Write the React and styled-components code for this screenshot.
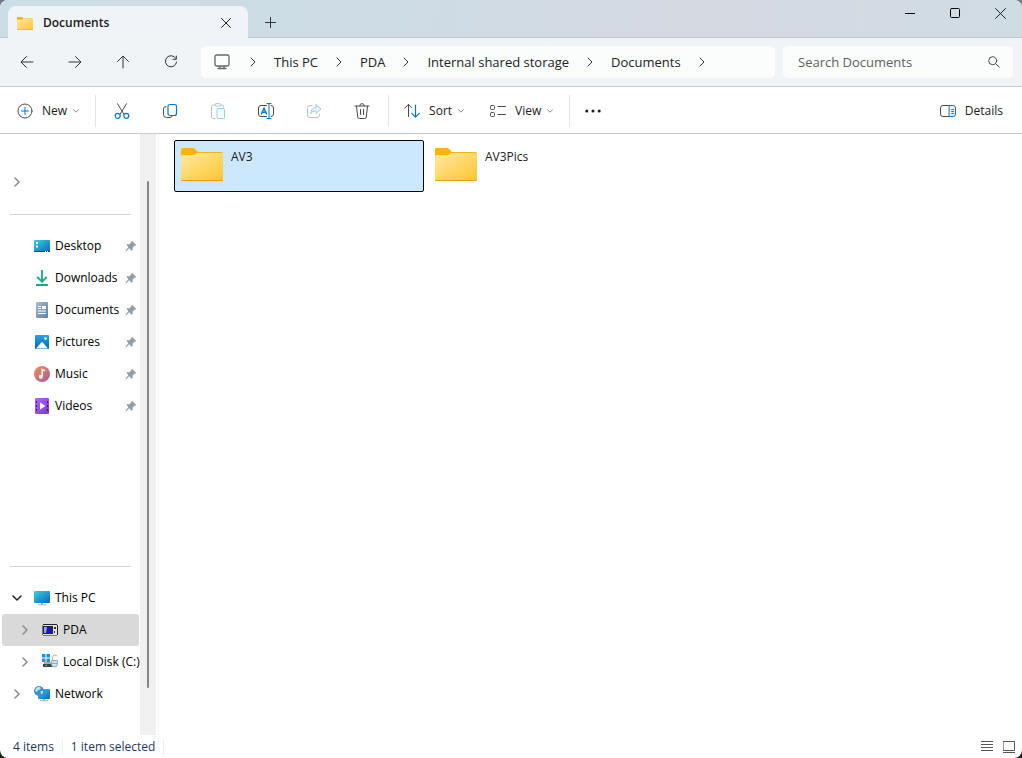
import React, { useState } from 'react';
import styled, { createGlobalStyle } from 'styled-components';

const quickAccess = [
  { name: 'Desktop', icon: 'desktop' },
  { name: 'Downloads', icon: 'downloads' },
  { name: 'Documents', icon: 'documents' },
  { name: 'Pictures', icon: 'pictures' },
  { name: 'Music', icon: 'music' },
  { name: 'Videos', icon: 'videos' },
];

const devices = [
  { name: 'This PC', icon: 'pc', depth: 0, open: true },
  { name: 'PDA', icon: 'pda', depth: 1, selected: true },
  { name: 'Local Disk (C:)', icon: 'disk', depth: 1 },
  { name: 'Network', icon: 'network', depth: 0 },
];

const crumbs = ['This PC', 'PDA', 'Internal shared storage', 'Documents'];

const folders = ['AV3', 'AV3Pics'];


// line icons of the bars
const Line = ({ w = 16, h = 16, color = '#4a4a4a', children }) => (
  <svg width={w} height={h} viewBox={`0 0 ${w} ${h}`} fill="none" stroke={color} strokeLinecap="round" strokeLinejoin="round" aria-hidden="true">
    {children}
  </svg>
);

const Chevron = ({ down, color = '#333', strokeWidth = 1 }) => (
  <Line w={10} h={10} color={color}>
    <path strokeWidth={strokeWidth} d={down ? 'M1 3l4 4 4-4' : 'M3 1l4 4-4 4'} />
  </Line>
);

const SmallDown = () => (
  <Line w={6} h={4} color="#8a8a8a"><path d="M.5.7L3 3.2 5.500.7" /></Line>
);

const Back = () => <Line color="#333"><path d="M14 8H2.300M7.500 2.500L2 8l5.500 5.500" /></Line>;
const Forward = () => <Line color="#333"><path d="M2 8h11.700M8.500 2.500L14 8l-5.500 5.500" /></Line>;
const Up = () => <Line color="#333"><path d="M8 14V2.300M2.500 7.500L8 2l5.500 5.500" /></Line>;
const Refresh = () => (
  <Line color="#333"><path d="M12.800 4.300A5.600 5.600 0 1 0 13.600 8M13.300 2v3.300H10" /></Line>
);
const Monitor = () => (
  <Line color="#666">
    <rect x="1" y="1" width="14" height="11" rx="1.800" strokeWidth="1.300" />
    <path strokeWidth="1.300" d="M6 12.500v2M10 12.500v2M4 14.500h8" />
  </Line>
);
const Close = ({ size = 10 }) => (
  <Line w={size} h={size} color="#222"><path d={`M.5.5l${size - 1} ${size - 1}M${size - .5}.5L.5 ${size - .5}`} /></Line>
);
const Plus = () => <Line w={11} h={11} color="#333"><path d="M5.500.5v10M.5 5.500h10" /></Line>;
const Minimize = () => <Line w={10} h={11} color="#000"><path d="M0 5.500h10" /></Line>;
const Maximize = () => <Line w={10} h={10} color="#000"><rect x=".5" y=".5" width="9" height="9" rx="1" /></Line>;
const Search = () => (
  <Line w={12} h={12} color="#444"><circle cx="4.700" cy="4.700" r="4" /><path d="M7.700 7.700l3.600 3.600" /></Line>
);

const NewIcon = () => (
  <Line>
    <circle cx="8" cy="8" r="7" />
    <path stroke="#0078d4" d="M8 4.500v7M4.500 8h7" />
  </Line>
);
const Cut = () => (
  <Line>
    <path d="M3.500.7l6.300 10.400M12.500.7L6.200 11.100" />
    <g stroke="#0078d4" strokeWidth="1.200"><circle cx="3.700" cy="12.800" r="2.500" /><circle cx="12.300" cy="12.800" r="2.500" /></g>
  </Line>
);
const Copy = () => (
  <Line>
    <path d="M4 3.500A2.500 2.500 0 0 0 1.500 6v5.500a3 3 0 0 0 3 3H8a2.500 2.500 0 0 0 2.300-1.500" />
    <rect x="6" y="1.500" width="8.500" height="11" rx="2" stroke="#0078d4" strokeWidth="1.200" />
  </Line>
);
const Paste = () => (
  <Line color="#c0c0c0">
    <path d="M5 2H2.500a1 1 0 0 0-1 1v11.500a1 1 0 0 0 1 1H5M11 2h1.500a1 1 0 0 1 1 1v1" />
    <rect x="5" y=".6" width="5.500" height="2.500" rx="1.200" />
    <rect x="7" y="5.500" width="7.500" height="10" rx="1" stroke="#9ccbf0" />
  </Line>
);
const Rename = () => (
  <Line>
    <path d="M8.500 2.500H3a2.500 2.500 0 0 0-2.500 2.500v6A2.500 2.500 0 0 0 3 13.500h5.500M13 2.500a2.500 2.500 0 0 1 2.500 2.500v6a2.500 2.500 0 0 1-2.500 2.500" />
    <path stroke="#0078d4" strokeWidth="1.400" d="M3.500 11L6 5l2.500 6M4.300 9.300h3.400" />
    <path stroke="#0078d4" d="M9 .5h4M9 15.500h4M11 .5v15" />
  </Line>
);
const Share = () => (
  <Line color="#c0c0c0">
    <path d="M6 2.500H4A2.500 2.500 0 0 0 1.500 5v7A2.500 2.500 0 0 0 4 14.500h7a2.500 2.500 0 0 0 2.500-2.500v-.8" />
    <path stroke="#9ccbf0" fill="#eaf5fd" d="M10 1.500l5 4.500-5 4.500V8C7.500 8 6 8.700 4.700 10.500 5 7 6.800 4.500 10 4.200z" />
  </Line>
);
const Trash = () => (
  <Line>
    <path d="M1 3h14M2.500 3.200l1.200 10.800a1.600 1.600 0 0 0 1.600 1.500h5.400a1.600 1.600 0 0 0 1.600-1.500l1.200-10.800M5.800 2.800a2.200 2.200 0 0 1 4.400 0M6.500 6.500v5M9.500 6.500v5" />
  </Line>
);
const Sort = () => (
  <Line>
    <path d="M4.500 13.500v-12M.7 5.200l3.800-3.800 3.300 3.300" />
    <path stroke="#0078d4" strokeWidth="1.200" d="M11.500 2v12M7.700 10.300l3.800 3.800 3.800-3.800" />
  </Line>
);
const ViewIcon = () => (
  <Line>
    <rect x=".5" y="2.500" width="4" height="4" rx="1" /><rect x=".5" y="9.500" width="4" height="4" rx="1" />
    <path d="M8 3.500h7.500M8 11.500h7.500" />
  </Line>
);
const More = () => (
  <svg width="16" height="4" viewBox="0 0 16 4" fill="#1b1b1b" aria-hidden="true">
    <circle cx="1.800" cy="2" r="1.500" /><circle cx="8" cy="2" r="1.500" /><circle cx="14.200" cy="2" r="1.500" />
  </svg>
);
const DetailsIcon = () => (
  <Line>
    <path d="M9.500 2.500H3A2.500 2.500 0 0 0 .5 5v6A2.500 2.500 0 0 0 3 13.500h6.500" />
    <path stroke="#0078d4" fill="#e8f3fc" d="M9.500 2.500H13A2.500 2.500 0 0 1 15.500 5v6a2.500 2.500 0 0 1-2.500 2.500H9.500z" />
    <path stroke="#0078d4" d="M11.700 6.500h1.800M11.700 8.500h1.800M11.700 10.500h1.800" />
  </Line>
);
const Pin = () => (
  <svg width="12" height="12" viewBox="0 0 12 12" fill="#949da5" aria-hidden="true">
    <path d="M7 .8L11.300 5l-.8.700-.9-.1-2 2.200.1 2.100-.9.800-2.600-2.500L1 11.400l-.7-.3 3.100-4.200L1.500 5l.8-.8 2.100.1L6.400 2.200l-.1-.7z" />
  </svg>
);
const ListView = () => <Line w={12} h={11} color="#555"><path strokeLinecap="butt" d="M0 .5h12M0 3.500h12M0 6.500h12M0 9.500h12" /></Line>;
const TileView = () => (
  <Line w={12} h={12} color="#555"><rect x=".5" y=".5" width="11" height="9" /><path strokeLinecap="butt" d="M0 11.500h12" /></Line>
);

const Folder = ({ width, height }) => (
  <svg width={width} height={height} viewBox="0 0 42 33" preserveAspectRatio="none" aria-hidden="true">
    <defs>
      <linearGradient id="folderFront" x1="0" y1="0" x2="1" y2="1">
        <stop offset="0" stopColor="#ffe9a3" />
        <stop offset="1" stopColor="#ffc62e" />
      </linearGradient>
    </defs>
    <path fill="#f9b50e" d="M0 1.500A1.500 1.500 0 0 1 1.500 0h10.300a3 3 0 0 1 2 .8L17 4h23.500A1.500 1.500 0 0 1 42 5.500V20H0z" />
    <path fill="#e3a01c" d="M0 12h42v19.500a1.500 1.500 0 0 1-1.500 1.500h-39A1.500 1.500 0 0 1 0 31.500z" />
    <path fill="url(#folderFront)" d="M0 8.500A1.500 1.500 0 0 1 1.500 7h10.700a3 3 0 0 0 1.800-.6L16 5h25a1 1 0 0 1 1 1v24.500a1.500 1.500 0 0 1-1.500 1.500h-39A1.500 1.500 0 0 1 0 30.500z" />
  </svg>
);

// colour drawings of the sidebar, all on a 16px square
const drawings = {
  desktop: (
    <>
      <rect y="2" width="16" height="12" rx="1" fill="url(#cyanBlue)" />
      <path fill="#fff" d="M2 4h2v2H2zM2 7.500h2v2H2z" />
      <path fill="#074f8c" d="M0 13h16v.500a.5.5 0 0 1-.5.5H.5a.5.500 0 0 1-.5-.5z" />
      <path fill="#fff" d="M11 13h1v1h-1zM13 13h1v1h-1z" />
    </>
  ),
  downloads: (
    <g fill="none" stroke="#17ab8d" strokeWidth="1.800"><path d="M8 0v11.500M3.200 7L8 11.700 12.800 7M2 15h12" /></g>
  ),
  documents: (
    <>
      <rect x="2" width="12" height="16" rx="1" fill="url(#slate)" />
      <path fill="#fff" d="M4 4h3v1H4zM4 6h3v1H4zM8 4h4v3H8zM4 8.500h8v1H4zM4 11h8v1H4z" />
    </>
  ),
  pictures: (
    <>
      <rect x="1" y="1" width="14" height="14" rx="1" fill="url(#photo)" />
      <path fill="#fff" d="M2 14.500l5.200-6a1 1 0 0 1 1.600 0l5.200 6z" />
      <circle cx="11.500" cy="4.500" r="1.300" fill="#fff" />
    </>
  ),
  music: (
    <>
      <circle cx="8" cy="8" r="8" fill="url(#disc)" />
      <circle cx="6.800" cy="10.800" r="2" fill="#fff" />
      <path fill="none" stroke="#fff" strokeWidth="1.400" d="M8.200 10.800V3.500l2.800 1.400" />
    </>
  ),
  videos: (
    <>
      <rect x="1" y="0" width="14" height="16" rx="1" fill="url(#purple)" />
      <path fill="#4a148c" d="M2 3h1v2H2zM2 7h1v2H2zM2 11h1v2H2zM13 3h1v2h-1zM13 7h1v2h-1zM13 11h1v2h-1z" />
      <path fill="#fff" d="M6 4.500l5.500 3.500L6 11.500z" />
    </>
  ),
  pc: (
    <>
      <rect y="1" width="16" height="12" rx="1" fill="url(#cyanBlue)" />
      <path fill="#9fb2be" d="M7 13h2v1.500H7zM4 14.300h8v1H4z" />
    </>
  ),
  pda: (
    <>
      <rect y="2" width="16" height="12" rx="1" fill="#e2e2dc" />
      <path fill="#777" d="M0 3h1v10H0zM1 13h14v1H1z" />
      <path fill="#222" d="M1 2h14v1H1zM1 4h10v8H1zM15 3h1v10h-1z" />
      <path fill="#1019b8" d="M2 5h8v6H2z" />
      <path fill="#8fa5ff" d="M2 5h3l-1 6H2z" />
      <path fill="#333" d="M12 5h2v2h-2zM12 9h1v2h-1z" />
    </>
  ),
  disk: (
    <>
      <path fill="#1a93e0" d="M0 0h3.500v3.500H0zM4.500 0H8v3.500H4.500zM0 4.500h3.500V8H0zM4.500 4.500H8V8H4.500z" />
      <path fill="#a8adb0" d="M2 8h12v2H2z" />
      <path fill="#3c4145" d="M1 10h12v3H1z" />
      <path fill="#34d36b" d="M3 11h2v1H3z" />
      <path fill="none" stroke="#9fb3bf" d="M10.500 6V3.500a2.500 2.500 0 0 1 4.800-1" />
      <path fill="#d6e2e9" stroke="#94a9b5" d="M9.500 6.500h6V10a3 3 0 0 1-6 0zM9.500 9.500h6" />
    </>
  ),
  network: (
    <>
      <rect x="4" y="3" width="12" height="10" rx="1" fill="url(#cyanBlue)" />
      <path fill="#9fb2be" d="M9 13h2v1.500H9zM6 14.300h8v1H6z" />
      <circle cx="5" cy="5" r="5" fill="#3d8fc4" />
      <path fill="#b5e0f2" d="M2 2l3-1.500L7 2 5.500 4H4L3 6 1 5zM6.500 5.500l2.500-1L9 7 7 8.500z" />
    </>
  ),
};

const PlaceIcon = ({ name }) => (
  <svg width="16" height="16" viewBox="0 0 16 16" aria-hidden="true">{drawings[name]}</svg>
);

const Gradients = () => (
  <HiddenDefs aria-hidden="true">
    <defs>
      <linearGradient id="cyanBlue" x1="0" y1="0" x2="1" y2="1"><stop stopColor="#35d2e4" /><stop offset="1" stopColor="#0c66bd" /></linearGradient>
      <linearGradient id="slate" x1="0" y1="0" x2="1" y2="1"><stop stopColor="#a9bdd3" /><stop offset="1" stopColor="#5f7f9f" /></linearGradient>
      <linearGradient id="photo" x1="0" y1="0" x2="0" y2="1"><stop stopColor="#22a5e8" /><stop offset="1" stopColor="#0a61b4" /></linearGradient>
      <linearGradient id="disc" x1="0" y1="0" x2="1" y2="1"><stop stopColor="#f3914e" /><stop offset="1" stopColor="#a55aa0" /></linearGradient>
      <linearGradient id="purple" x1="0" y1="0" x2="1" y2="1"><stop stopColor="#b36af0" /><stop offset="1" stopColor="#7a35d8" /></linearGradient>
    </defs>
  </HiddenDefs>
);


export default function App() {

  const [search, setSearch] = useState('');
  const [current, setCurrent] = useState('AV3');

  return (
    <>
      <GlobalStyle />
      <Gradients />
      <Window>
        <TitleBar>
          <Tab>
            <Folder width={16} height={13} />
            <strong>Documents</strong>
            <TabButton aria-label="Close tab"><Close /></TabButton>
          </Tab>
          <NewTabButton aria-label="New tab"><Plus /></NewTabButton>
          <WindowButtons>
            <button aria-label="Minimize"><Minimize /></button>
            <button aria-label="Maximize"><Maximize /></button>
            <button aria-label="Close"><Close size={11} /></button>
          </WindowButtons>
        </TitleBar>

        <NavBar>
          <NavButtons>
            <IconButton aria-label="Back"><Back /></IconButton>
            <IconButton aria-label="Forward"><Forward /></IconButton>
            <IconButton aria-label="Up"><Up /></IconButton>
            <IconButton aria-label="Refresh"><Refresh /></IconButton>
          </NavButtons>
          <Address aria-label="Address">
            <Monitor />
            <CrumbArrow><Chevron /></CrumbArrow>
            {crumbs.map((crumb) => (
              <React.Fragment key={crumb}>
                <a href="#folder">{crumb}</a>
                <CrumbArrow><Chevron /></CrumbArrow>
              </React.Fragment>
            ))}
          </Address>
          <SearchBox>
            <input
              type="text"
              aria-label="Search Documents"
              placeholder="Search Documents"
              value={search}
              onChange={(e) => setSearch(e.target.value)}
            />
            <Search />
          </SearchBox>
        </NavBar>

        <CommandBar>
          <TextButton><NewIcon />New<SmallDown /></TextButton>
          <Group>
            <IconButton aria-label="Cut"><Cut /></IconButton>
            <IconButton aria-label="Copy"><Copy /></IconButton>
            <IconButton aria-label="Paste" disabled><Paste /></IconButton>
            <IconButton aria-label="Rename"><Rename /></IconButton>
            <IconButton aria-label="Share" disabled><Share /></IconButton>
            <IconButton aria-label="Delete"><Trash /></IconButton>
          </Group>
          <Group>
            <TextButton><Sort />Sort<SmallDown /></TextButton>
            <TextButton><ViewIcon />View<SmallDown /></TextButton>
          </Group>
          <Group>
            <MoreButton aria-label="See more"><More /></MoreButton>
          </Group>
          <DetailsButton><DetailsIcon />Details</DetailsButton>
        </CommandBar>

        <Main>
          <Sidebar>
            <TreeRow $depth={0} aria-label="Expand">
              <Expander><Chevron color="#8a8a8a" strokeWidth={1.5} /></Expander>
            </TreeRow>
            <Separator />
            {quickAccess.map((place) => (
              <TreeRow key={place.name} $depth={0}>
                <Expander />
                <PlaceIcon name={place.icon} />
                <RowLabel>{place.name}</RowLabel>
                <Pin />
              </TreeRow>
            ))}
            <Pinned />
            <Separator />
            {devices.map((place) => (
              <TreeRow key={place.name} $depth={place.depth} $selected={place.selected}>
                <Expander>
                  <Chevron down={place.open} color={place.open ? '#222' : '#8a8a8a'} strokeWidth={1.5} />
                </Expander>
                <PlaceIcon name={place.icon} />
                <RowLabel>{place.name}</RowLabel>
              </TreeRow>
            ))}
          </Sidebar>
          <ScrollTrack><ScrollThumb /></ScrollTrack>
          <Files>
            {folders.map((folder) => (
              <Tile key={folder} $selected={folder === current} onClick={() => setCurrent(folder)}>
                <Folder width={42} height={33} />
                <span>{folder}</span>
              </Tile>
            ))}
          </Files>
        </Main>

        <StatusBar>
          <span>4 items</span>
          <span>1 item selected</span>
          <ViewButtons>
            <button aria-label="List view"><ListView /></button>
            <button aria-label="Tile view"><TileView /></button>
          </ViewButtons>
        </StatusBar>
      </Window>
    </>
  );
}


const GlobalStyle = createGlobalStyle`
  * {
    box-sizing: border-box;
  }
  body {
    margin: 0;
    background: linear-gradient(#6f7c88, #1c2418);
    font-family: "Segoe UI", "Open Sans", sans-serif;
    font-size: 12px;
    line-height: 16px;
    color: #1b1b1b;
  }
  button, input {
    font: inherit;
    color: inherit;
    border: none;
    background: none;
    padding: 0;
    margin: 0;
  }
  svg {
    display: block;
    flex-shrink: 0;
  }
`;

const HiddenDefs = styled.svg`
  position: absolute;
  width: 0;
  height: 0;
`;

const Window = styled.div`
  min-height: 100vh;
  display: flex;
  flex-direction: column;
  border-radius: 8px;
  overflow: hidden;
  background: #fff;
`;

const TitleBar = styled.header`
  height: 38px;
  display: flex;
  align-items: flex-end;
  padding-left: 8px;
  background: linear-gradient(100deg, #cbdde7, #cddce5 35%, #d5d9e2 68%, #d0dce3);
  border-bottom: 1px solid #c0cad2;
`;

const Tab = styled.div`
  width: 240px;
  height: 32px;
  margin-bottom: -1px;
  padding: 2px 2px 0 9px;
  display: flex;
  align-items: center;
  gap: 10px;
  border-radius: 8px 8px 0 0;
  background: #f0f4f8;
  strong {
    flex: 1;
    font-weight: 600;
  }
`;

const TabButton = styled.button`
  width: 40px;
  height: 30px;
  display: grid;
  place-items: center;
`;

const NewTabButton = styled(TabButton)`
  margin-left: 2px;
`;

const WindowButtons = styled.div`
  margin-left: auto;
  align-self: flex-start;
  display: flex;
  button {
    width: 45px;
    height: 26px;
    display: grid;
    place-items: center;
  }
  button:last-child {
    padding-left: 2px;
  }
`;

const NavBar = styled.nav`
  height: 49px;
  display: flex;
  align-items: center;
  gap: 8px;
  padding: 0 9px 0 3px;
  background: #f0f4f7;
  border-bottom: 1px solid #c3ccd3;
  font-size: 13px;
  line-height: 20px;
`;

const NavButtons = styled.div`
  display: flex;
  width: 190px;
`;

const IconButton = styled.button`
  width: 48px;
  height: 32px;
  flex-shrink: 0;
  display: grid;
  place-items: center;
`;

const MoreButton = styled(IconButton)`
  width: 42px;
`;

const Address = styled.div`
  flex: 1;
  min-width: 0;
  height: 32px;
  display: flex;
  align-items: center;
  padding-left: 13px;
  border-radius: 5px;
  background: #fbfdfd;
  overflow: hidden;
  white-space: nowrap;
  > svg {
    margin-right: 2px;
  }
  a {
    color: #222;
    text-decoration: none;
  }
`;

const CrumbArrow = styled.span`
  width: 42px;
  flex-shrink: 0;
  display: grid;
  place-items: center;
`;

const SearchBox = styled.label`
  width: 230px;
  height: 32px;
  display: flex;
  align-items: center;
  padding: 0 13px 0 15px;
  border-radius: 5px;
  background: #fbfdfd;
  input {
    flex: 1;
    min-width: 0;
    outline: none;
  }
  input::placeholder {
    color: #606060;
    opacity: 1;
  }
`;

const CommandBar = styled.div`
  height: 47px;
  display: flex;
  align-items: center;
  padding: 2px 19px 0 17px;
  border-bottom: 1px solid #c8cacd;
`;

const TextButton = styled.button`
  height: 32px;
  display: flex;
  align-items: center;
  gap: 6px;
  margin-right: 14px;
  svg:first-child {
    margin-right: 3px;
  }
  & + & {
    margin-left: 12px;
  }
`;

const Group = styled.div`
  height: 32px;
  display: flex;
  align-items: center;
  margin-left: 2px;
  border-left: 1px solid #e5e5e5;
  padding-left: 2px;
  ${TextButton}:first-child {
    margin-left: 13px;
  }
`;

const DetailsButton = styled(TextButton)`
  margin: 0 0 0 auto;
`;

const Main = styled.main`
  flex: 1;
  display: flex;
`;

const Sidebar = styled.aside`
  width: 140px;
  flex-shrink: 0;
  padding: 32px 1px 24px 2px;
  color: #000;
`;

const TreeRow = styled.button`
  width: 100%;
  height: 32px;
  display: flex;
  align-items: center;
  padding: 0 2px 0 ${({ $depth }) => 6 + $depth * 8}px;
  border-radius: 3px;
  background: ${({ $selected }) => ($selected ? '#d9d9d9' : 'transparent')};
  text-align: left;
  white-space: nowrap;
`;

const Expander = styled.span`
  width: 18px;
  flex-shrink: 0;
  margin-right: 8px;
  display: grid;
  place-items: center;
`;

const RowLabel = styled.span`
  flex: 1;
  min-width: 0;
  padding-left: 5px;
`;

const Separator = styled.hr`
  height: 1px;
  margin: 16px 8px 15px;
  border: none;
  background: #d4d4d4;
`;

// empty room under the pinned places
const Pinned = styled.div`
  height: 128px;
`;

const ScrollTrack = styled.div`
  width: 16px;
  flex-shrink: 0;
  display: flex;
  justify-content: center;
  padding: 47px 0;
  background: #f0f0f0;
`;

const ScrollThumb = styled.div`
  width: 2px;
  border-radius: 1px;
  background: #858585;
`;

const Files = styled.section`
  flex: 1;
  margin-left: 2px;
  padding: 6px 15px;
  border-left: 1px solid #f5f5f5;
  display: grid;
  grid-template-columns: repeat(auto-fill, 250px);
  align-content: start;
  gap: 4px;
`;

const Tile = styled.button`
  height: 52px;
  display: flex;
  align-items: flex-start;
  gap: 8px;
  padding: 7px 6px;
  border: 1px solid ${({ $selected }) => ($selected ? '#000' : 'transparent')};
  border-radius: 2px;
  background: ${({ $selected }) => ($selected ? '#cce8ff' : 'transparent')};
  span {
    padding-top: 1px;
  }
`;

const StatusBar = styled.footer`
  height: 23px;
  display: flex;
  align-items: center;
  padding: 0 7px 0 5px;
  color: #1e395b;
  > span {
    padding: 0 8px;
    border-right: 1px solid #eee;
  }
`;

const ViewButtons = styled.div`
  margin-left: auto;
  display: flex;
  gap: 10px;
`;
